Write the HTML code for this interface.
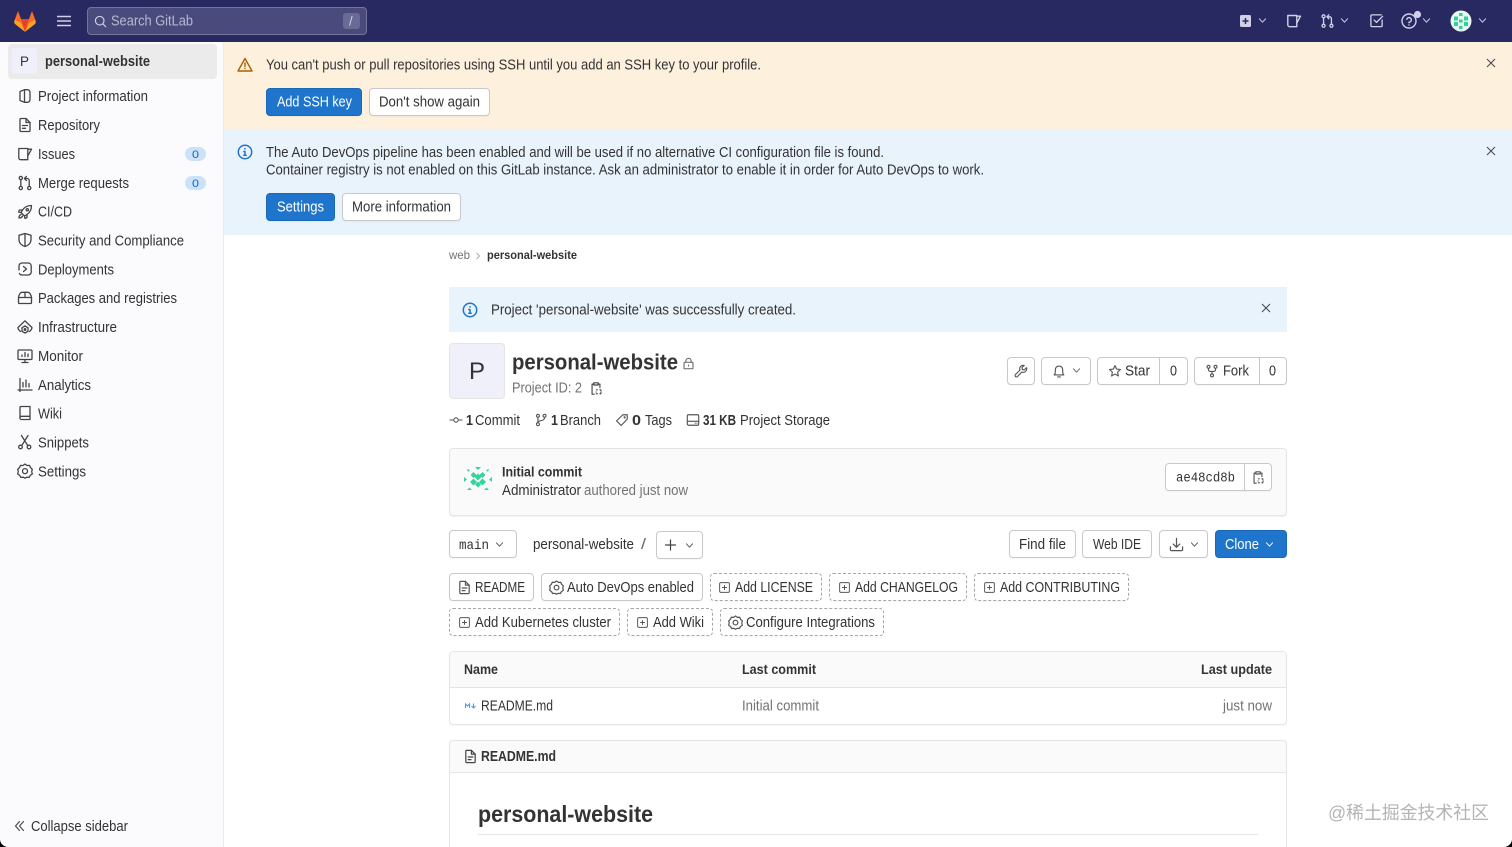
<!DOCTYPE html>
<html lang="en">
<head>
<meta charset="utf-8">
<title>personal-website · GitLab</title>
<style>
html,body{margin:0;padding:0;width:1512px;height:847px;overflow:hidden;background:#fff;font-family:"Liberation Sans",sans-serif}
#page{position:relative;width:1512px;height:847px;overflow:hidden;background:#fff}
.a{position:absolute;box-sizing:border-box}
.btn{position:absolute;box-sizing:border-box;height:28px;background:#fff;border:1px solid #c9c9c9;border-radius:4px;box-shadow:0 1px 1px rgba(0,0,0,.04)}
.blue{background:#1f75cb;border-color:#1a68b8}
.dash{border:1px dashed #a8a8a8;background:#fff}
svg.o{position:absolute;left:0;top:0}
text{font-family:"Liberation Sans",sans-serif;font-size:14.4px;fill:#333}
.b{font-weight:bold}
.g{fill:#737373}
.w{fill:#fff}
.m{font-family:"Liberation Mono",monospace;font-size:14px}
.i{fill:none;stroke:#444;stroke-width:1.3;stroke-linecap:round;stroke-linejoin:round}
.n{fill:none;stroke:#d1d0e8;stroke-width:1.4;stroke-linecap:round;stroke-linejoin:round}
.bl{fill:none;stroke:#1f75cb;stroke-width:1.5;stroke-linecap:round;stroke-linejoin:round}
</style>
</head>
<body>
<div id="page">
<div class="a" style="left:0;top:0;width:1512px;height:42px;background:#292961"></div>
<div class="a" style="left:87px;top:7px;width:280px;height:28px;background:#4a4a7c;border:1px solid #74749f;border-radius:4px"></div>
<div class="a" style="left:343px;top:13px;width:17px;height:16px;background:#6a6a96;border-radius:3px"></div>

<div class="a" style="left:0;top:42px;width:224px;height:805px;background:#fbfafd;border-right:1px solid #ececef"></div>
<div class="a" style="left:8px;top:44px;width:209px;height:35px;background:#ebebeb;border-radius:4px"></div>
<div class="a" style="left:12px;top:48px;width:25px;height:26px;background:#f0f0fa;border-radius:3px"></div>

<div class="a" style="left:224px;top:42px;width:1288px;height:88px;background:#fdf1dd"></div>
<div class="a" style="left:224px;top:130px;width:1288px;height:105px;background:#e9f3fc"></div>
<div class="btn blue" style="left:266px;top:88px;width:96px"></div>
<div class="btn" style="left:369px;top:88px;width:121px"></div>
<div class="btn blue" style="left:266px;top:193px;width:69px"></div>
<div class="btn" style="left:342px;top:193px;width:119px"></div>

<div class="a" style="left:449px;top:287px;width:838px;height:45px;background:#e9f3fc"></div>
<div class="a" style="left:449px;top:343px;width:56px;height:56px;background:#f0f0fa;border:1px solid #e5e5e5;border-radius:4px"></div>

<div class="btn" style="left:1007px;top:357px;width:28px"></div>
<div class="btn" style="left:1041px;top:357px;width:50px"></div>
<div class="btn" style="left:1097px;top:357px;width:63px;border-radius:4px 0 0 4px"></div>
<div class="btn" style="left:1159px;top:357px;width:29px;border-radius:0 4px 4px 0"></div>
<div class="btn" style="left:1194px;top:357px;width:66px;border-radius:4px 0 0 4px"></div>
<div class="btn" style="left:1259px;top:357px;width:28px;border-radius:0 4px 4px 0"></div>

<div class="a" style="left:449px;top:448px;width:838px;height:68px;background:#fafafa;border:1px solid #e5e5e5;border-radius:4px;box-shadow:0 1px 1px rgba(0,0,0,.05)"></div>
<div class="btn" style="left:1165px;top:463px;width:80px;border-radius:4px 0 0 4px"></div>
<div class="btn" style="left:1244px;top:463px;width:28px;border-radius:0 4px 4px 0"></div>

<div class="btn" style="left:449px;top:530px;width:68px"></div>
<div class="btn" style="left:656px;top:531px;width:47px"></div>
<div class="btn" style="left:1009px;top:530px;width:67px"></div>
<div class="btn" style="left:1082px;top:530px;width:70px"></div>
<div class="btn" style="left:1159px;top:530px;width:49px"></div>
<div class="btn blue" style="left:1215px;top:530px;width:72px"></div>

<div class="btn" style="left:449px;top:573px;width:85px"></div>
<div class="btn" style="left:541px;top:573px;width:162px"></div>
<div class="btn dash" style="left:710px;top:573px;width:112px"></div>
<div class="btn dash" style="left:829px;top:573px;width:138px"></div>
<div class="btn dash" style="left:974px;top:573px;width:155px"></div>
<div class="btn dash" style="left:449px;top:608px;width:171px"></div>
<div class="btn dash" style="left:627px;top:608px;width:86px"></div>
<div class="btn dash" style="left:720px;top:608px;width:164px"></div>

<div class="a" style="left:449px;top:651px;width:838px;height:74px;background:#fff;border:1px solid #e5e5e5;border-radius:4px;box-shadow:0 1px 1px rgba(0,0,0,.04)"></div>
<div class="a" style="left:450px;top:652px;width:836px;height:36px;background:#fafafa;border-bottom:1px solid #e5e5e5;border-radius:4px 4px 0 0"></div>

<div class="a" style="left:449px;top:740px;width:838px;height:107px;background:#fff;border:1px solid #e5e5e5;border-bottom:0;border-radius:4px 4px 0 0"></div>
<div class="a" style="left:450px;top:741px;width:836px;height:32px;background:#fafafa;border-bottom:1px solid #e5e5e5;border-radius:4px 4px 0 0"></div>
<div class="a" style="left:478px;top:834px;width:780px;height:1px;background:#e5e5e5"></div>

<svg class="o" width="1512" height="847" viewBox="0 0 1512 847" xmlns="http://www.w3.org/2000/svg">
<defs>
<symbol id="info" viewBox="0 0 16 16"><path d="M3 3.500 7.500 1.700v12.600L3 12.500z"/><path d="M7.500 1.700h3A2.500 2.500 0 0 1 13 4.200v7.600a2.500 2.500 0 0 1-2.500 2.500h-3"/></symbol>
<symbol id="doc" viewBox="0 0 16 16"><path d="M3 2.500a1 1 0 0 1 1-1h5l4 4v8a1 1 0 0 1-1 1H4a1 1 0 0 1-1-1z"/><path d="M9 1.500v4h4M5.500 8.500h5M5.500 11.300h3"/></symbol>
<symbol id="issue" viewBox="0 0 16 16"><path d="M1.800 2.500h9v11.200H3.800a2 2 0 0 1-2-2z"/><path d="M10.800 3.200h3.700l-3.700 6.800"/></symbol>
<symbol id="mr" viewBox="0 0 16 16"><circle cx="3.800" cy="3" r="1.600"/><circle cx="3.800" cy="13" r="1.600"/><circle cx="12.200" cy="13" r="1.600"/><path d="M3.800 4.600v6.800M12.200 11.400V5.500a2 2 0 0 0-2-2H7.600M9.400 1.400 7.400 3.500l2 2.100"/></symbol>
<symbol id="rocket" viewBox="0 0 16 16"><path d="M14.500 1.500c-4 0-7 1.600-9 4.500L4 8.500l3.500 3.500 2.500-1.500c3-2 4.500-5 4.500-9z"/><path d="M5.500 6H2.500L1.500 8l2.800.6M10 10.500v3l-2 1-.6-2.800M4 10.500c-1.500.5-2 2-2 3.500 1.500 0 3-.5 3.500-2"/><circle cx="10.300" cy="5.700" r="1.100"/></symbol>
<symbol id="shield" viewBox="0 0 16 16"><path d="M8 1.500 14 3.300v4.200c0 3.500-2.600 6-6 7-3.400-1-6-3.500-6-7V3.300z"/><path d="M8 1.500v13"/></symbol>
<symbol id="deploy" viewBox="0 0 16 16"><path d="M2 9V5a3 3 0 0 1 3-3h6.500a3 3 0 0 1 2.700 3v6a3 3 0 0 1-3 3H5a3 3 0 0 1-2.600-1.600"/><path d="M6.500 5.500 9.500 8l-3 2.500"/></symbol>
<symbol id="pkg" viewBox="0 0 16 16"><path d="M1.500 7.300C2 4.500 3.500 2.300 5 2.300h6c1.500 0 3 2.200 3.500 5v5.200a1 1 0 0 1-1 1h-11a1 1 0 0 1-1-1z"/><path d="M1.500 7.500h13M8 2.300v5.200"/></symbol>
<symbol id="infra" viewBox="0 0 16 16"><path d="M3.500 12.500C1.500 11 .8 9.500 1 8.500L8 1.800l6.900 6.700c.1 1-.6 2.500-2.400 4"/><path d="m8 7 3 1.700v3.600L8 14l-3-1.700V8.700z"/><circle cx="8" cy="10.500" r=".8"/></symbol>
<symbol id="monitor" viewBox="0 0 16 16"><rect x="1" y="2" width="14" height="9.500" rx="1"/><path d="M5 8.500V7M8 8.500V4.500M11 8.500V6M8 11.500v3M5 14.500h6"/></symbol>
<symbol id="chart" viewBox="0 0 16 16"><path d="M3 1.500v13M1 13h14M6 5.500V10M9 3v7M12 6.500V10"/></symbol>
<symbol id="wiki" viewBox="0 0 16 16"><path d="M3 12.500V2.500a1 1 0 0 1 1-1h9v13H4.500a1.500 1.500 0 0 1 0-3.200H13"/></symbol>
<symbol id="snip" viewBox="0 0 16 16"><circle cx="3.500" cy="13" r="1.800"/><circle cx="12" cy="13" r="1.800"/><path d="M4.700 11.700 11 1.500M10.800 11.700 4.500 1.500"/></symbol>
<symbol id="gear" viewBox="0 0 16 16"><path d="M8 1 10 2.500l2.500-.1 1 2.200 1.800 1.700-.6 2.300.6 2.400-2 1.400-1.200 2-2.400-.2L8 15.200l-1.700-1-2.400.2-1.200-2-2-1.400.6-2.400-.6-2.300 1.800-1.700 1-2.200 2.500.1z"/><circle cx="8" cy="8.100" r="2.500"/></symbol>
<symbol id="chev" viewBox="0 0 16 16"><path d="M3.500 5.500 8 10.500l4.500-5"/></symbol>
<symbol id="x" viewBox="0 0 16 16"><path d="M3 3l10 10M13 3 3 13"/></symbol>
<symbol id="circi" viewBox="0 0 16 16"><circle cx="8" cy="8" r="6.700"/><path d="M8 7.500v3.800M6.800 7.500H8M6.800 11.300h2.400M8 4.600v.4"/></symbol>
<symbol id="clip" viewBox="0 0 16 16"><path d="M5 3H3.500v11.500H6M11 3h1.500v4"/><path d="M5.500 1.500h5v2.500h-5zM8.500 9.500h1M8.500 14h1M12.500 9.500h1v1M12.500 14h1v-1M8 12v.1M14 12v.1"/></symbol>
<symbol id="plusb" viewBox="0 0 16 16"><rect x="2" y="2" width="12" height="12" rx="1.500"/><path d="M8 5.500v5M5.500 8h5"/></symbol>
<symbol id="fork" viewBox="0 0 16 16"><circle cx="4" cy="3.200" r="1.700"/><circle cx="12" cy="3.200" r="1.700"/><circle cx="8" cy="13" r="1.700"/><path d="M4 5v1.500a2 2 0 0 0 2 2h4a2 2 0 0 0 2-2V5M8 8.500v2.800"/></symbol>
<symbol id="branch" viewBox="0 0 16 16"><circle cx="4.500" cy="3.200" r="1.700"/><circle cx="4.500" cy="12.800" r="1.700"/><circle cx="12" cy="3.200" r="1.700"/><path d="M4.500 5v6M12 5c0 3-2 3.500-4 3.800-2 .3-3.500 1-3.500 2.200"/></symbol>
<symbol id="star" viewBox="0 0 16 16"><path d="m8 1.800 1.900 4 4.400.5-3.300 3 .9 4.400L8 11.500l-3.900 2.200.9-4.400-3.300-3 4.400-.5z"/></symbol>
<symbol id="bell" viewBox="0 0 16 16"><path d="M2.500 12.500c1-1 1.300-2 1.300-3.500V6.500a4.200 4.200 0 0 1 8.400 0V9c0 1.500.3 2.500 1.300 3.500zM6.500 14.800h3"/></symbol>
<symbol id="wrench" viewBox="0 0 16 16"><path d="M10.500 1.500a4 4 0 0 0-3.700 5.500L1.700 12a1.600 1.600 0 0 0 2.300 2.300l5-5.100a4 4 0 0 0 5.300-5L11.800 6.700 9.500 6.300 9.200 4l2.500-2.400a4 4 0 0 0-1.200-.1z"/></symbol>
<symbol id="tag" viewBox="0 0 16 16"><path d="M9 2h5v5l-7 7.300L1.800 9z"/><circle cx="11" cy="5" r=".6"/></symbol>
<symbol id="disk" viewBox="0 0 16 16"><rect x="1.500" y="2" width="13" height="12" rx="1.500"/><path d="M1.500 9.500h13M10.500 11.700h.1M12.500 11.700h.1"/></symbol>
<symbol id="lock" viewBox="0 0 16 16"><rect x="2.500" y="6.500" width="11" height="8" rx="1"/><path d="M4.800 6.500V4.800a3.200 3.200 0 0 1 6.400 0v1.700M8 10v1.200"/></symbol>
<symbol id="dl" viewBox="0 0 16 16"><path d="M8 1.500v9M4.500 7.500 8 11l3.500-3.500M1.500 10.500v3a1 1 0 0 0 1 1h11a1 1 0 0 0 1-1v-3"/></symbol>
<symbol id="todo" viewBox="0 0 16 16"><path d="M14 7.500v6a1 1 0 0 1-1 1H3a1 1 0 0 1-1-1V3a1 1 0 0 1 1-1h10"/><path d="m5.500 7.500 2.500 2.500 6.500-6.500"/></symbol>
<symbol id="help" viewBox="0 0 16 16"><circle cx="8" cy="8" r="7"/><path d="M5.800 6.300A2.300 2.300 0 1 1 8 9.200v.6M8 12v.1"/></symbol>
<symbol id="search" viewBox="0 0 16 16"><circle cx="7" cy="7" r="5.300"/><path d="m11 11 3.500 3.500"/></symbol>
<symbol id="id2" viewBox="0 0 16 16"><circle cx="8" cy="8" r="2.500"/><path d="M1 8h4.500M10.500 8H15"/></symbol>
</defs>

<!-- GitLab logo -->
<path d="M14.500 20.500 18 11l3 8h8l3-8 3.500 9.500c.6 1.700.1 3-1.200 4L25 31.700l-9.300-7.200c-1.300-1-1.800-2.300-1.200-4z" fill="#fc6d26"/>
<path d="M21 19h8l-4 12.700z" fill="#e24329"/>
<path d="M14.500 20.500c.3-1 2.500.5 6.500 2.500l4 8.700-9.300-7.200c-1.300-1-1.800-2.300-1.200-4z" fill="#fca326"/>
<path d="M35.500 20.500c-.3-1-2.500.5-6.500 2.500l-4 8.700 9.300-7.200c1.300-1 1.800-2.300 1.200-4z" fill="#fca326"/>
<path d="M57 16.500h14M57 21h14M57 25.500h14" stroke="#d1d0e8" stroke-width="1.500" fill="none"/>

<use href="#search" x="94" y="15" width="13" height="13" class="n"/>
<text x="111" y="25.500" textLength="82" lengthAdjust="spacingAndGlyphs" style="fill:#b8b8d2">Search GitLab</text>
<text x="349" y="25.500" style="fill:#d1d0e8;font-size:13px">/</text>

<!-- top right -->
<rect x="1240" y="15" width="11" height="12" rx="1.500" fill="#d1d0e8"/><path d="M1245.500 18v6M1242.500 21h6" stroke="#292961" stroke-width="1.500"/>
<use href="#chev" x="1257" y="15" width="11" height="11" class="n"/>
<use href="#issue" x="1286" y="13" width="16" height="16" class="n"/>
<use href="#mr" x="1320" y="13" width="15" height="16" class="n"/>
<use href="#chev" x="1339" y="15" width="11" height="11" class="n"/>
<use href="#todo" x="1369" y="13" width="15" height="15" class="n"/>
<use href="#help" x="1401" y="13" width="16" height="16" class="n"/>
<circle cx="1417.500" cy="14.500" r="3.600" fill="#d1d0e8"/>
<use href="#chev" x="1421" y="15" width="11" height="11" class="n"/>
<circle cx="1461" cy="21" r="10.500" fill="#e6f7f1"/>
<path d="M1454 16.500h4v4h-4zM1464 16.500h4v4h-4zM1454 22h4v4h-4zM1464 22h4v4h-4zM1459 13h3.500v3h-3.500zM1459 26h3.500v3h-3.500zM1459 19.500h3.500v3h-3.500z" fill="#35cf9a"/>
<use href="#chev" x="1477" y="15" width="11" height="11" class="n"/>

<!-- sidebar -->
<text x="20" y="66" textLength="9" lengthAdjust="spacingAndGlyphs" style="font-size:13.500px">P</text>
<text x="45" y="66" textLength="105" lengthAdjust="spacingAndGlyphs" class="b">personal-website</text>
<use href="#info" x="17" y="88" width="16" height="16" class="i"/>
<text x="38" y="101" textLength="110" lengthAdjust="spacingAndGlyphs">Project information</text>
<use href="#doc" x="17" y="117" width="16" height="16" class="i"/>
<text x="38" y="130" textLength="62" lengthAdjust="spacingAndGlyphs">Repository</text>
<use href="#issue" x="17" y="146" width="16" height="16" class="i"/>
<text x="38" y="159" textLength="37" lengthAdjust="spacingAndGlyphs">Issues</text>
<rect x="185" y="147" width="21" height="14" rx="7" fill="#cbe2f9"/>
<text x="192" y="158" textLength="7" lengthAdjust="spacingAndGlyphs" style="font-size:11px;fill:#1068bf">0</text>
<use href="#mr" x="17" y="175" width="16" height="16" class="i"/>
<text x="38" y="188" textLength="91" lengthAdjust="spacingAndGlyphs">Merge requests</text>
<rect x="185" y="176" width="21" height="14" rx="7" fill="#cbe2f9"/>
<text x="192" y="187" textLength="7" lengthAdjust="spacingAndGlyphs" style="font-size:11px;fill:#1068bf">0</text>
<use href="#rocket" x="17" y="204" width="16" height="16" class="i"/>
<text x="38" y="216.500" textLength="34" lengthAdjust="spacingAndGlyphs">CI/CD</text>
<use href="#shield" x="17" y="232" width="16" height="16" class="i"/>
<text x="38" y="245.500" textLength="146" lengthAdjust="spacingAndGlyphs">Security and Compliance</text>
<use href="#deploy" x="17" y="261" width="16" height="16" class="i"/>
<text x="38" y="274.500" textLength="76" lengthAdjust="spacingAndGlyphs">Deployments</text>
<use href="#pkg" x="17" y="290" width="16" height="16" class="i"/>
<text x="38" y="303" textLength="139" lengthAdjust="spacingAndGlyphs">Packages and registries</text>
<use href="#infra" x="17" y="319" width="16" height="16" class="i"/>
<text x="38" y="332" textLength="79" lengthAdjust="spacingAndGlyphs">Infrastructure</text>
<use href="#monitor" x="17" y="348" width="16" height="16" class="i"/>
<text x="38" y="361" textLength="45" lengthAdjust="spacingAndGlyphs">Monitor</text>
<use href="#chart" x="17" y="377" width="16" height="16" class="i"/>
<text x="38" y="390" textLength="53" lengthAdjust="spacingAndGlyphs">Analytics</text>
<use href="#wiki" x="17" y="405" width="16" height="16" class="i"/>
<text x="38" y="418.500" textLength="24" lengthAdjust="spacingAndGlyphs">Wiki</text>
<use href="#snip" x="17" y="434" width="16" height="16" class="i"/>
<text x="38" y="447.500" textLength="51" lengthAdjust="spacingAndGlyphs">Snippets</text>
<use href="#gear" x="17" y="463" width="16" height="16" class="i"/>
<text x="38" y="476.500" textLength="48" lengthAdjust="spacingAndGlyphs">Settings</text>
<path d="M19.500 821.500 15.500 826l4 4.500M23.500 821.500 19.500 826l4 4.500" class="i" style="stroke-width:1.100"/>
<text x="31" y="831" textLength="97" lengthAdjust="spacingAndGlyphs">Collapse sidebar</text>

<!-- alerts -->
<path d="M245 58.500 252 71h-14zM245 63v3.500M245 68.500v.2" fill="none" stroke="#ab6100" stroke-width="1.400" stroke-linejoin="round" stroke-linecap="round"/>
<text x="266" y="69.500" textLength="495" lengthAdjust="spacingAndGlyphs">You can't push or pull repositories using SSH until you add an SSH key to your profile.</text>
<use href="#x" x="1485" y="57" width="12" height="12" class="i"/>
<text x="277" y="106.500" textLength="75" lengthAdjust="spacingAndGlyphs" class="w">Add SSH key</text>
<text x="379" y="106.500" textLength="101" lengthAdjust="spacingAndGlyphs">Don't show again</text>
<use href="#circi" x="237" y="144" width="16" height="16" class="bl"/>
<text x="266" y="157" textLength="618" lengthAdjust="spacingAndGlyphs">The Auto DevOps pipeline has been enabled and will be used if no alternative CI configuration file is found.</text>
<text x="266" y="174.500" textLength="718" lengthAdjust="spacingAndGlyphs">Container registry is not enabled on this GitLab instance. Ask an administrator to enable it in order for Auto DevOps to work.</text>
<use href="#x" x="1485" y="145" width="12" height="12" class="i"/>
<text x="277" y="211.500" textLength="47" lengthAdjust="spacingAndGlyphs" class="w">Settings</text>
<text x="352" y="211.500" textLength="99" lengthAdjust="spacingAndGlyphs">More information</text>

<!-- breadcrumb -->
<text x="449" y="259" textLength="21" lengthAdjust="spacingAndGlyphs" class="g" style="font-size:12px">web</text>
<path d="m476.500 253 3 3-3 3" fill="none" stroke="#aaa" stroke-width="1"/>
<text x="487" y="259" textLength="90" lengthAdjust="spacingAndGlyphs" class="b" style="font-size:12px">personal-website</text>

<!-- notice -->
<use href="#circi" x="462" y="302" width="16" height="16" class="bl"/>
<text x="491" y="314.500" textLength="305" lengthAdjust="spacingAndGlyphs">Project 'personal-website' was successfully created.</text>
<use href="#x" x="1260" y="302" width="12" height="12" class="i"/>

<!-- project header -->
<text x="477" y="379" text-anchor="middle" style="font-size:24px">P</text>
<text x="512" y="369.500" textLength="166" lengthAdjust="spacingAndGlyphs" class="b" style="font-size:22px">personal-website</text>
<use href="#lock" x="682" y="357" width="13" height="13" class="i" style="stroke:#666"/>
<text x="512" y="392.500" textLength="70" lengthAdjust="spacingAndGlyphs" class="g">Project ID: 2</text>
<use href="#clip" x="589" y="381" width="14" height="15" class="i"/>

<use href="#wrench" x="1014" y="364" width="14" height="14" class="i" style="stroke:#555"/>
<use href="#bell" x="1052" y="364" width="14" height="14" class="i" style="stroke:#555"/>
<use href="#chev" x="1071" y="365" width="11" height="11" class="i" style="stroke:#666"/>
<use href="#star" x="1108" y="364" width="14" height="14" class="i" style="stroke:#555"/>
<text x="1125" y="375.500" textLength="25" lengthAdjust="spacingAndGlyphs">Star</text>
<text x="1170" y="375.500" textLength="7" lengthAdjust="spacingAndGlyphs">0</text>
<use href="#fork" x="1205" y="364" width="14" height="14" class="i" style="stroke:#555"/>
<text x="1223" y="375.500" textLength="26" lengthAdjust="spacingAndGlyphs">Fork</text>
<text x="1269" y="375.500" textLength="7" lengthAdjust="spacingAndGlyphs">0</text>

<!-- stats -->
<use href="#id2" x="449" y="413" width="14" height="14" class="i" style="stroke:#555;stroke-width:1.200"/>
<text x="466" y="425" textLength="7" lengthAdjust="spacingAndGlyphs" class="b">1</text>
<text x="475" y="425" textLength="45" lengthAdjust="spacingAndGlyphs">Commit</text>
<use href="#branch" x="534" y="413" width="14" height="14" class="i" style="stroke:#555"/>
<text x="551" y="425" textLength="7" lengthAdjust="spacingAndGlyphs" class="b">1</text>
<text x="560" y="425" textLength="41" lengthAdjust="spacingAndGlyphs">Branch</text>
<use href="#tag" x="615" y="413" width="14" height="14" class="i" style="stroke:#555"/>
<text x="632" y="425" textLength="9" lengthAdjust="spacingAndGlyphs" class="b">0</text>
<text x="645" y="425" textLength="27" lengthAdjust="spacingAndGlyphs">Tags</text>
<use href="#disk" x="686" y="413" width="14" height="14" class="i" style="stroke:#555"/>
<text x="703" y="425" textLength="33" lengthAdjust="spacingAndGlyphs" class="b">31 KB</text>
<text x="740" y="425" textLength="90" lengthAdjust="spacingAndGlyphs">Project Storage</text>

<!-- commit -->
<g fill="#35d3a0">
<path d="M478 473.500l3.500 3.500-3.500 3.500-3.500-3.500zM473.500 478.500l3.500 3.500-3.500 3.500-3.500-3.500zM482.500 478.500l3.500 3.500-3.500 3.500-3.500-3.500zM473.500 472l3 3-3 3-3-3zM482.500 472l3 3-3 3-3-3zM478 481.500l3 3-3 3-3-3z"/>
<path d="M475 467h6l-3 3zM464 477l3 2.500-3 2.500zM492 477l-3 2.500 3 2.500zM467 490h5l-2.500-2.500zM484 490h5l-2.500-2.500zM467 469l3 1-2 2zM489 469l-3 1 2 2z"/>
</g>
<text x="502" y="476.500" textLength="80" lengthAdjust="spacingAndGlyphs" class="b" style="font-size:13.800px">Initial commit</text>
<text x="502" y="495" textLength="79" lengthAdjust="spacingAndGlyphs">Administrator</text>
<text x="584" y="495" textLength="104" lengthAdjust="spacingAndGlyphs" class="g">authored just now</text>
<text x="1176" y="481.500" textLength="59" lengthAdjust="spacingAndGlyphs" class="m">ae48cd8b</text>
<use href="#clip" x="1251" y="470" width="14" height="15" class="i" style="stroke:#555"/>

<!-- branch row -->
<text x="459" y="549" textLength="30" lengthAdjust="spacingAndGlyphs" class="m">main</text>
<use href="#chev" x="494" y="539" width="11" height="11" class="i" style="stroke:#555"/>
<text x="533" y="549" textLength="101" lengthAdjust="spacingAndGlyphs">personal-website</text>
<text x="641" y="549" textLength="5" lengthAdjust="spacingAndGlyphs" style="fill:#666">/</text>
<path d="M670.500 540v10M665.500 545h10" class="i" style="stroke-width:1.200"/>
<use href="#chev" x="684" y="540" width="11" height="11" class="i" style="stroke:#555"/>
<text x="1019" y="549" textLength="47" lengthAdjust="spacingAndGlyphs">Find file</text>
<text x="1093" y="549" textLength="48" lengthAdjust="spacingAndGlyphs">Web IDE</text>
<use href="#dl" x="1169" y="537" width="15" height="15" class="i" style="stroke:#555"/>
<use href="#chev" x="1189" y="539" width="11" height="11" class="i" style="stroke:#555"/>
<text x="1225" y="549" textLength="34" lengthAdjust="spacingAndGlyphs" class="w">Clone</text>
<use href="#chev" x="1264" y="539" width="11" height="11" class="i" style="stroke:#fff"/>

<!-- actions -->
<use href="#doc" x="457" y="580" width="15" height="15" class="i" style="stroke:#555"/>
<text x="475" y="592" textLength="50" lengthAdjust="spacingAndGlyphs">README</text>
<use href="#gear" x="549" y="580" width="15" height="15" class="i" style="stroke:#555"/>
<text x="567" y="592" textLength="127" lengthAdjust="spacingAndGlyphs">Auto DevOps enabled</text>
<use href="#plusb" x="718" y="581" width="13" height="13" class="i" style="stroke:#555;stroke-width:1.200"/>
<text x="735" y="592" textLength="78" lengthAdjust="spacingAndGlyphs">Add LICENSE</text>
<use href="#plusb" x="838" y="581" width="13" height="13" class="i" style="stroke:#555;stroke-width:1.200"/>
<text x="855" y="592" textLength="103" lengthAdjust="spacingAndGlyphs">Add CHANGELOG</text>
<use href="#plusb" x="983" y="581" width="13" height="13" class="i" style="stroke:#555;stroke-width:1.200"/>
<text x="1000" y="592" textLength="120" lengthAdjust="spacingAndGlyphs">Add CONTRIBUTING</text>
<use href="#plusb" x="458" y="616" width="13" height="13" class="i" style="stroke:#555;stroke-width:1.200"/>
<text x="475" y="627" textLength="136" lengthAdjust="spacingAndGlyphs">Add Kubernetes cluster</text>
<use href="#plusb" x="636" y="616" width="13" height="13" class="i" style="stroke:#555;stroke-width:1.200"/>
<text x="653" y="627" textLength="51" lengthAdjust="spacingAndGlyphs">Add Wiki</text>
<use href="#gear" x="728" y="615" width="15" height="15" class="i" style="stroke:#555"/>
<text x="746" y="627" textLength="129" lengthAdjust="spacingAndGlyphs">Configure Integrations</text>

<!-- table -->
<text x="464" y="674" textLength="34" lengthAdjust="spacingAndGlyphs" class="b" style="font-size:13.800px">Name</text>
<text x="742" y="674" textLength="74" lengthAdjust="spacingAndGlyphs" class="b" style="font-size:13.800px">Last commit</text>
<text x="1201" y="674" textLength="71" lengthAdjust="spacingAndGlyphs" class="b" style="font-size:13.800px">Last update</text>
<path d="M465.500 708v-4l2 2 2-2v4M473.500 703.500v4M471.500 706l2 2 2-2" fill="none" stroke="#4a9fe8" stroke-width="1.100"/>
<text x="481" y="710.500" textLength="72" lengthAdjust="spacingAndGlyphs">README.md</text>
<text x="742" y="710.500" textLength="77" lengthAdjust="spacingAndGlyphs" class="g">Initial commit</text>
<text x="1223" y="710.500" textLength="49" lengthAdjust="spacingAndGlyphs" class="g">just now</text>

<!-- readme -->
<use href="#doc" x="463" y="749" width="15" height="15" class="i"/>
<text x="481" y="761" textLength="75" lengthAdjust="spacingAndGlyphs" class="b">README.md</text>
<text x="478" y="822" textLength="175" lengthAdjust="spacingAndGlyphs" class="b" style="font-size:23px">personal-website</text>

<!-- watermark -->
<text x="1328" y="819" textLength="161" lengthAdjust="spacingAndGlyphs" style="font-family:'Liberation Sans','Noto Sans CJK SC',sans-serif;font-size:18px;fill:#b4b4b4">@稀土掘金技术社区</text>

<!-- window corners -->
<path d="M0 847V839A8 8 0 0 0 8 847Z" fill="#000"/>
<path d="M1512 847V839A8 8 0 0 1 1504 847Z" fill="#000"/>
</svg>
</div>
</body>
</html>
